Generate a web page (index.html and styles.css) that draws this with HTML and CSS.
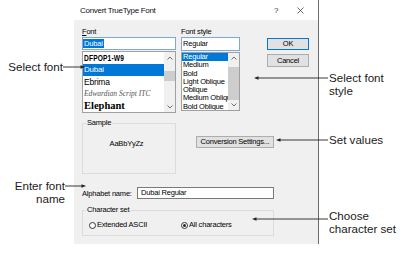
FILE: index.html
```html
<!DOCTYPE html>
<html><head><meta charset="utf-8">
<title>Convert TrueType Font</title>
<link rel="stylesheet" href="styles.css">
</head>
<body>
<div class="canvas">

<div class="dialog">
	<div class="titlebar">
		<span class="title">Convert TrueType Font</span>
		<span class="help">?</span>
		<svg class="close" width="7" height="7" viewBox="0 0 7 7"><path d="M0.5 0.5L6.5 6.5M6.5 0.5L0.5 6.5"/></svg>
	</div>
	<div class="client">
		<div class="top">
			<div class="col fontcol">
				<div class="lbl"><u>F</u>ont</div>
				<div class="edit fontedit"><span class="sel">Dubai</span></div>
				<div class="list fontlist">
					<div class="items">
						<div class="it dfpop"><span>DFPOP1-W9</span></div>
						<div class="it on">Dubai</div>
						<div class="it ebrima">Ebrima</div>
						<div class="it script">Edwardian Script ITC</div>
						<div class="it elephant">Elephant</div>
					</div>
					<div class="sb">
						<div class="arr"><svg width="6" height="4" viewBox="0 0 6 4"><path d="M0.5 3.5L3 1L5.5 3.5"/></svg></div>
						<div class="track"><div class="thumb"></div></div>
						<div class="arr"><svg width="6" height="4" viewBox="0 0 6 4"><path d="M0.5 0.5L3 3L5.5 0.5"/></svg></div>
					</div>
				</div>
			</div>
			<div class="col stylecol">
				<div class="lbl">Font style</div>
				<div class="edit styleedit">Regular</div>
				<div class="list stylelist">
					<div class="items">
						<div class="it on">Regular</div>
						<div class="it">Medium</div>
						<div class="it">Bold</div>
						<div class="it">Light Oblique</div>
						<div class="it">Oblique</div>
						<div class="it">Medium Oblique</div>
						<div class="it">Bold Oblique</div>
					</div>
					<div class="sb">
						<div class="arr"><svg width="6" height="4" viewBox="0 0 6 4"><path d="M0.5 3.5L3 1L5.5 3.5"/></svg></div>
						<div class="track"><div class="thumb"></div></div>
						<div class="arr"><svg width="6" height="4" viewBox="0 0 6 4"><path d="M0.5 0.5L3 3L5.5 0.5"/></svg></div>
					</div>
				</div>
			</div>
			<div class="col btncol">
				<div class="btn ok">OK</div>
				<div class="btn cancel">Cancel</div>
			</div>
		</div>

		<div class="mid">
			<fieldset class="group sample">
				<legend>Sample</legend>
				<div class="sampletext">AaBbYyZz</div>
			</fieldset>
			<div class="btn convert">Conversion Settings...</div>
		</div>

		<div class="alpha">
			<div class="alphalbl">Alphabet name:</div>
			<div class="edit alphaedit">Dubai Regular</div>
		</div>

		<fieldset class="group charset">
			<legend>Character set</legend>
			<div class="radios">
				<div class="opt first"><span class="rb"></span>Extended ASCII</div>
				<div class="opt"><span class="rb on"></span>All characters</div>
			</div>
		</fieldset>
	</div>
</div>

<div class="callout c-font">Select font</div>
<div class="callout c-style">Select font<br>style</div>
<div class="callout c-values">Set values</div>
<div class="callout c-name">Enter font<br>name</div>
<div class="callout c-charset">Choose<br>character set</div>

<svg class="arrows" width="418" height="261" viewBox="0 0 418 261">
	<path d="M63 67H82M328 78H257M328 140H279M65 186H83M328 219H255"/>
	<polygon points="85,67 80.5,65.3 80.5,68.7"/>
	<polygon points="254,78 258.5,76.3 258.5,79.7"/>
	<polygon points="276,140 280.5,138.3 280.5,141.7"/>
	<polygon points="86,186 81.5,184.3 81.5,187.7"/>
	<polygon points="252,219 256.5,217.3 256.5,220.7"/>
</svg>

</div>
</body>
</html>
```

FILE: styles.css
```css
body {
	margin: 0;
	background: #fff;
	font-family: "Liberation Sans", Arial, sans-serif;
}
.canvas {
	position: relative;
	width: 418px;
	height: 261px;
	overflow: hidden;
}
.dialog {
	margin-left: 74px;
	width: 244px;
	height: 244px;
	border-right: 1px solid #6b6b6b;
	display: flex;
	flex-direction: column;
	font-size: 7.5px;
	letter-spacing: -0.2px;
	color: #000;
}
.titlebar {
	height: 20px;
	display: flex;
	align-items: center;
}
.title {
	flex: 1;
	margin-left: 6px;
	font-size: 8px;
	letter-spacing: -0.3px;
	color: #111;
}
.help {
	width: 5px;
	margin-right: 18px;
	font-size: 8px;
	color: #333;
}
.close {
	margin-right: 14px;
	fill: none;
	stroke: #444;
	stroke-width: 0.8;
}
.client {
	flex: 1;
	background: #f0f0f0;
	padding: 6px 0 0 8px;
}

/* top row */
.top {
	display: flex;
	height: 87px;
}
.col {
	display: flex;
	flex-direction: column;
}
.lbl {
	height: 11px;
	line-height: 11px;
}
.fontcol {
	width: 94px;
}
.stylecol {
	width: 59px;
	margin-left: 5px;
}
.btncol {
	width: 42px;
	margin-left: 27px;
	padding-top: 12px;
}
.edit {
	box-sizing: border-box;
	background: #fff;
	border: 1px solid #7a7a7a;
	white-space: nowrap;
	overflow: hidden;
}
.fontedit, .styleedit {
	border-color: #7ea6d8;
}
.fontedit {
	height: 13px;
	padding-top: 1px;
}
.fontedit .sel {
	display: inline-block;
	height: 9px;
	line-height: 9px;
	padding: 0 1px;
	background: #0078d7;
	color: #fff;
}
.styleedit {
	height: 14px;
	line-height: 12px;
	padding-left: 1px;
}
.list {
	box-sizing: border-box;
	margin-top: 1px;
	background: #fff;
	border: 1px solid #a0a0a0;
	display: flex;
}
.items {
	flex: 1;
	overflow: hidden;
}
.it {
	white-space: nowrap;
	overflow: hidden;
	padding-left: 1px;
}
.it.on {
	background: #0078d7;
	color: #fff;
}
.fontlist {
	height: 62px;
}
.fontlist .it {
	height: 12px;
	line-height: 12px;
	font-size: 8px;
}
.fontlist .dfpop span {
	display: inline-block;
	font-weight: bold;
	font-size: 8.5px;
	letter-spacing: 0.2px;
	transform: scaleX(0.78);
	transform-origin: left center;
}
.fontlist .ebrima {
	font-size: 8.5px;
}
.fontlist .script {
	font-family: "Liberation Serif", serif;
	font-style: italic;
	font-size: 7.5px;
	letter-spacing: 0;
	color: #555;
}
.fontlist .elephant {
	font-family: "Liberation Serif", serif;
	font-weight: bold;
	font-size: 10.5px;
	letter-spacing: 0;
}
.stylelist {
	height: 59px;
}
.stylelist .it {
	height: 8.3px;
	line-height: 8.3px;
}
.sb {
	width: 11px;
	background: #f0f0f0;
	display: flex;
	flex-direction: column;
}
.sb .arr {
	height: 11px;
	display: flex;
	align-items: center;
	justify-content: center;
}
.sb .arr svg {
	fill: none;
	stroke: #606060;
	stroke-width: 0.9;
}
.sb .track {
	flex: 1;
}
.sb .thumb {
	background: #cdcdcd;
}
.fontlist .thumb {
	margin-top: 8px;
	height: 10px;
}
.stylelist .sb .arr {
	height: 10px;
}
.stylelist .thumb {
	margin-top: 4px;
	height: 33px;
}
.btn {
	box-sizing: border-box;
	height: 12px;
	line-height: 10px;
	text-align: center;
	background: #e1e1e1;
	border: 1px solid #adadad;
	white-space: nowrap;
}
.ok {
	border-color: #0078d7;
}
.cancel {
	height: 13px;
	line-height: 11px;
	margin-top: 4px;
}

/* sample row */
.mid {
	display: flex;
	margin-top: 5px;
}
.group {
	box-sizing: border-box;
	margin: 0;
	padding: 0;
	min-width: 0;
	border: 1px solid #dcdcdc;
}
.group legend {
	padding: 0 1px;
	margin-left: 3px;
	line-height: 10px;
	font-size: 7.5px;
}
.sample {
	width: 94px;
	height: 56px;
}
.sampletext {
	margin-top: 11px;
	line-height: 10px;
	text-align: center;
	padding-right: 5px;
}
.convert {
	width: 78px;
	margin: 18px 0 0 20px;
}

/* alphabet name */
.alpha {
	display: flex;
	align-items: center;
	margin-top: 13px;
	height: 12px;
}
.alphalbl {
	width: 55px;
}
.alphaedit {
	width: 137px;
	height: 12px;
	line-height: 10px;
	padding-left: 3px;
}

/* character set */
.charset {
	width: 192px;
	height: 31px;
	margin-top: 6px;
}
.radios {
	display: flex;
	align-items: center;
	padding: 6px 0 0 6px;
}
.opt {
	display: flex;
	align-items: center;
	line-height: 8px;
}
.opt.first {
	width: 92px;
}
.rb {
	box-sizing: border-box;
	width: 7px;
	height: 7px;
	margin-right: 1px;
	border: 1px solid #333;
	border-radius: 50%;
	background: #fff;
	display: flex;
	align-items: center;
	justify-content: center;
}
.rb.on::after {
	content: "";
	width: 3px;
	height: 3px;
	border-radius: 50%;
	background: #222;
}

/* callouts */
.callout {
	position: absolute;
	font-size: 11.6px;
	line-height: 12.6px;
	color: #1a1a1a;
	white-space: nowrap;
}
.c-font {
	right: 355px;
	top: 61px;
}
.c-style {
	left: 329px;
	top: 72px;
}
.c-values {
	left: 329px;
	top: 134px;
}
.c-name {
	right: 353px;
	top: 180px;
	text-align: right;
}
.c-charset {
	left: 329px;
	top: 210px;
}
.arrows {
	position: absolute;
	left: 0;
	top: 0;
	pointer-events: none;
}
.arrows path {
	fill: none;
	stroke: #222;
	stroke-width: 0.9;
}
.arrows polygon {
	fill: #222;
}
```
